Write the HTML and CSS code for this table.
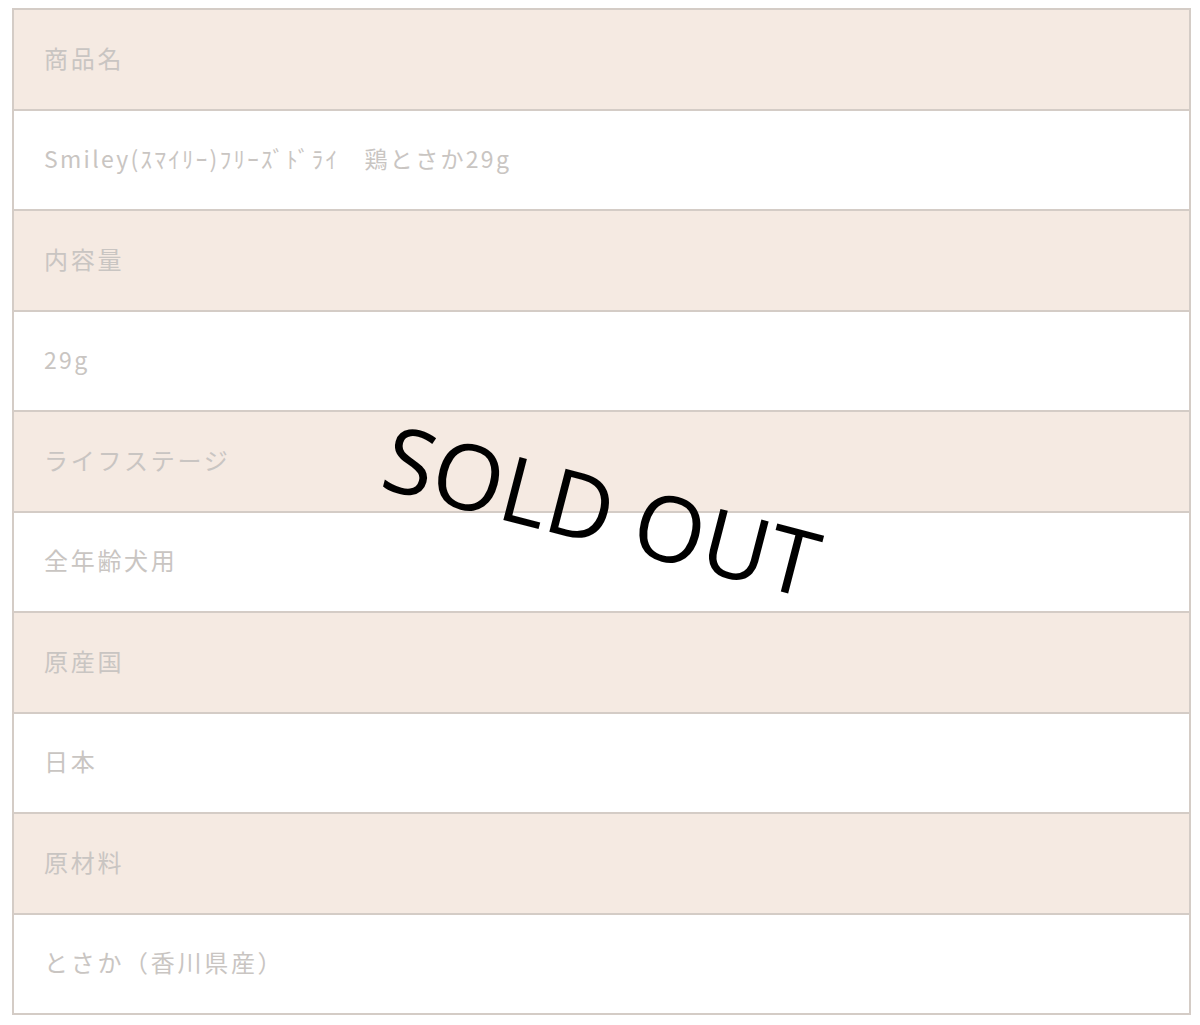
FILE: index.html
```html
<!DOCTYPE html>
<html lang="ja">
<head>
<meta charset="utf-8">
<link rel="stylesheet" href="styles.css">
</head>
<body>
<div class="wrap">
  <table class="spec">
    <tr class="head"><td>商品名</td></tr>
    <tr><td class="name">Smiley(ｽﾏｲﾘｰ)ﾌﾘｰｽﾞﾄﾞﾗｲ　鶏とさか29g</td></tr>
    <tr class="head"><td>内容量</td></tr>
    <tr><td class="name">29g</td></tr>
    <tr class="head"><td>ライフステージ</td></tr>
    <tr><td>全年齢犬用</td></tr>
    <tr class="head"><td>原産国</td></tr>
    <tr><td>日本</td></tr>
    <tr class="head"><td>原材料</td></tr>
    <tr><td>とさか（香川県産）</td></tr>
  </table>
  <div class="soldout">SOLD OUT</div>
</div>
</body>
</html>
```
FILE: styles.css
```css
html, body {
  margin: 0;
  padding: 0;
  background: #ffffff;
}
.wrap {
  position: relative;
  padding: 8px 9px 0 12px;
}
.spec {
  width: 100%;
  border-collapse: collapse;
  font-family: "Noto Sans CJK JP", "Noto Sans", sans-serif;
  font-size: 24px;
  letter-spacing: 2.7px;
  color: #c9c5c2;
}
.spec td {
  height: 94.5px;
  padding: 0 0 4px 30px;
  border: 2px solid #d4ccc6;
  vertical-align: middle;
  background: #ffffff;
}
.spec td.name {
  font-size: 23px;
  letter-spacing: 2.3px;
}
.spec tr.head td {
  background: #f5eae2;
}
.soldout {
  position: absolute;
  left: 398px;
  top: 410px;
  font-family: "Open Sans", sans-serif;
  font-size: 91px;
  color: #000;
  line-height: 1;
  transform: rotate(14.5deg);
  transform-origin: 0 0;
  white-space: nowrap;
}
```
